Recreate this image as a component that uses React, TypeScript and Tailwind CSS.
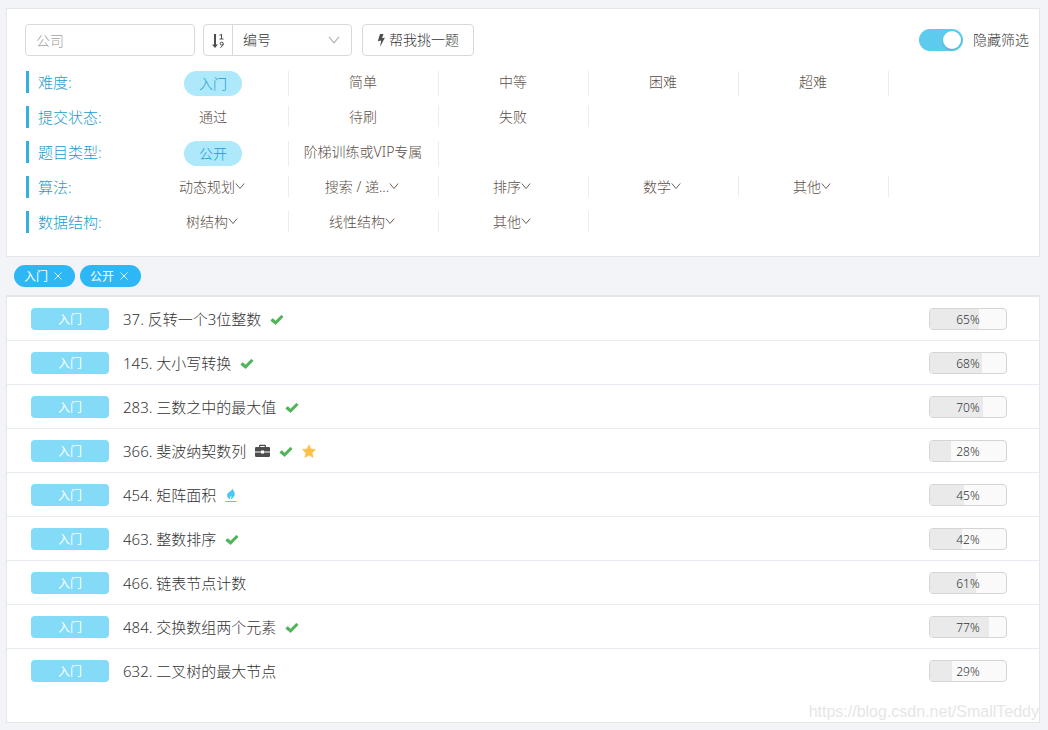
import React, { useState } from 'react';

type Mark = 'check' | 'case' | 'star' | 'flame';

type Option = { label: string; menu?: boolean; active?: boolean };

const filters: { name: string; options: Option[] }[] = [
  {
    name: '难度:',
    options: [
      { label: '入门', active: true },
      { label: '简单' },
      { label: '中等' },
      { label: '困难' },
      { label: '超难' },
    ],
  },
  { name: '提交状态:', options: [{ label: '通过' }, { label: '待刷' }, { label: '失败' }] },
  { name: '题目类型:', options: [{ label: '公开', active: true }, { label: '阶梯训练或VIP专属' }] },
  {
    name: '算法:',
    options: [
      { label: '动态规划', menu: true },
      { label: '搜索 / 递...', menu: true },
      { label: '排序', menu: true },
      { label: '数学', menu: true },
      { label: '其他', menu: true },
    ],
  },
  {
    name: '数据结构:',
    options: [
      { label: '树结构', menu: true },
      { label: '线性结构', menu: true },
      { label: '其他', menu: true },
    ],
  },
];

const problems: { title: string; rate: number; marks: Mark[] }[] = [
  { title: '37. 反转一个3位整数', rate: 65, marks: ['check'] },
  { title: '145. 大小写转换', rate: 68, marks: ['check'] },
  { title: '283. 三数之中的最大值', rate: 70, marks: ['check'] },
  { title: '366. 斐波纳契数列', rate: 28, marks: ['case', 'check', 'star'] },
  { title: '454. 矩阵面积', rate: 45, marks: ['flame'] },
  { title: '463. 整数排序', rate: 42, marks: ['check'] },
  { title: '466. 链表节点计数', rate: 61, marks: [] },
  { title: '484. 交换数组两个元素', rate: 77, marks: ['check'] },
  { title: '632. 二叉树的最大节点', rate: 29, marks: [] },
];

function Chevron({ className }: { className: string }) {
  return (
    <svg viewBox="0 0 10 10" className={className} fill="none" stroke="currentColor" strokeWidth=".9" aria-hidden="true">
      <path d="M.8 1.500 5 6.500 9.200 1.500" />
    </svg>
  );
}

function MarkIcon({ mark }: { mark: Mark }) {
  if (mark === 'check') {
    return (
      <svg viewBox="0 0 14 14" className="size-3.5 text-[#52b45a]" fill="currentColor" aria-hidden="true">
        <path d="M.8 8.1 2.4 6.500Q2.800 6.200 3.200 6.500L5.500 8.700 11 3.200Q11.400 2.900 11.800 3.200L13.200 4.500Q13.500 4.900 13.200 5.300L6.100 12.500Q5.600 13 5.100 12.500L.8 8.900Q.4 8.500 .8 8.100Z" />
      </svg>
    );
  }
  if (mark === 'case') {
    return (
      <svg viewBox="0 0 15 14" className="h-3.5 w-[15px] text-[#4d4d4d]" fill="currentColor" aria-hidden="true">
        <path d="M4 3V1.800Q4 .8 5 .8H10Q11 .8 11 1.800V3H13.800Q15 3 15 4.200V7.500H9V6.500H6V7.500H0V4.200Q0 3 1.200 3ZM5.300 3H9.700V2H5.300ZM0 8.500H6V9.500H9V8.500H15V11.800Q15 13 13.800 13H1.200Q0 13 0 11.800Z" />
      </svg>
    );
  }
  if (mark === 'star') {
    return (
      <svg viewBox="0 0 14 14" className="size-3.5 text-[#fdbf45]" fill="currentColor" stroke="currentColor" strokeWidth=".5" strokeLinejoin="round" aria-hidden="true">
        <path d="M7 .8 9 4.900 13.600 5.400 10.200 8.700 11.200 13.500 7 11.100 2.800 13.500 3.800 8.700.4 5.400 5 4.900Z" />
      </svg>
    );
  }
  return (
    <svg viewBox="0 0 12 14" className="h-3.5 w-3 text-[#4cc6f2]" fill="currentColor" aria-hidden="true">
      <path d="M7.200 0C7.400 2 9.900 3.200 9.800 6 9.700 8.400 8 10 5.400 11.700 6.400 9.800 6.600 8.800 6.200 7.500 5.400 9 4.800 9.600 4.900 11.300 2.700 10 1.700 8.400 2.200 6.300 2.800 4 7.400 3.400 7.200 0ZM.5 13H11.500V14H.5Z" />
    </svg>
  );
}

function SortIcon() {
  return (
    <svg viewBox="0 0 14 16" className="mt-0.5 h-4 w-3.5 text-[#4d4d4d]" fill="none" stroke="currentColor" aria-hidden="true">
      <path d="M4 1V12" strokeWidth="2" />
      <path d="M1 11.500H7L4 15Z" fill="currentColor" stroke="none" />
      <path d="M8.500 2.300 10.500 1.300V6M8.500 6H12.500M12.200 11Q12 12.100 10.700 12.100T9.200 10.600 10.700 9.100 12.300 11 9.400 14.600" />
    </svg>
  );
}

export default function App() {
  const [shown, setShown] = useState(true);
  return (
    <div className="relative min-h-screen bg-[#f3f4f8] pt-2 pr-2 pb-[7px] pl-1.5 font-['Noto_Sans','Noto_Sans_CJK_SC',sans-serif] text-sm font-light text-[#333333]">
      <section className="border border-[#e4e7ea] bg-white px-[18px] pt-[15px] pb-2.5">
        <div className="mb-[15px] flex items-center gap-2">
          <input
            aria-label="公司"
            placeholder="公司"
            className="h-8 w-[170px] rounded border border-[#d9d9d9] px-2.5 placeholder:text-[#a0a0a0]"
          />
          <div className="mr-0.5 flex h-8 rounded border border-[#d9d9d9]">
            <button type="button" aria-label="排序方向" className="flex w-[29px] items-center justify-center border-r border-[#d9d9d9]">
              <SortIcon />
            </button>
            <div className="relative flex">
              <select aria-label="排序" className="w-[118px] appearance-none bg-transparent px-2.5 outline-none">
                <option>编号</option>
              </select>
              <Chevron className="pointer-events-none absolute top-2.5 right-[11px] size-3 text-[#b0b0b0]" />
            </div>
          </div>
          <button type="button" className="flex h-8 items-center gap-1 rounded border border-[#d9d9d9] px-3.5">
            <svg viewBox="0 0 8 13" className="h-[13px] w-2 text-[#4d4d4d]" fill="currentColor" aria-hidden="true">
              <path d="M3 0H6.500L5 4.200 8 3.600 3 13 4.200 6.600.8 7.300Z" />
            </svg>
            帮我挑一题
          </button>
          <label className="-mr-2 ml-auto flex items-center gap-2.5">
            <input type="checkbox" role="switch" checked={shown} onChange={() => setShown(!shown)} className="peer sr-only" />
            <span className="flex h-[22px] w-11 items-center rounded-full bg-[#bfbfbf] px-0.5 peer-checked:justify-end peer-checked:bg-[#5ccbee]">
              <span className="size-[18px] rounded-full bg-white shadow" />
            </span>
            隐藏筛选
          </label>
        </div>
        {shown && (
          <div className="flex flex-col pl-px">
            {filters.map((f) => (
              <div key={f.name} className="flex h-[35px] items-start">
                <h2 className="w-[113px] shrink-0 border-l-[3px] border-[#32b1dc] pl-[9px] text-[15px] leading-[22px] text-[#1c9bcc]">
                  {f.name}
                </h2>
                {f.options.map((o, i) => (
                  <div
                    key={i}
                    className={`flex w-[150px] justify-center border-r border-[#ececec] pr-px ${f.options.some((x) => x.active) ? 'h-[25px]' : 'h-[21px]'}`}
                  >
                    <button
                      type="button"
                      className={
                        o.active
                          ? 'h-[25px] rounded-full bg-[#ade8fb] px-[15px] leading-[25px] text-[#1c9bcc]'
                          : 'flex h-[22px] items-center text-[#5c4f47]'
                      }
                    >
                      {o.label}
                      {o.menu && <Chevron className="mr-0.5 size-2.5" />}
                    </button>
                  </div>
                ))}
              </div>
            ))}
          </div>
        )}
      </section>

      <div className="flex gap-[5px] px-2 py-2">
        {['入门', '公开'].map((t) => (
          <button key={t} type="button" className="flex h-[22px] items-center gap-1.5 rounded-full bg-[#2db7f5] pr-[13px] pl-2.5 text-xs leading-6 font-normal text-white">
            <span className="pt-px">{t}</span>
            <svg viewBox="0 0 8 9" className="h-[9px] w-2" fill="none" stroke="currentColor" strokeWidth=".8" aria-hidden="true">
              <path d="M.5.5 7.500 7.500M7.500.5.5 7.500" />
            </svg>
          </button>
        ))}
      </div>

      <section className="border border-t-2 border-[#e4e7ea] bg-white pb-[30px]">
        <ul>
          {problems.map((p) => (
            <li key={p.title} className="flex border-b border-[#e8eaf2] pt-[11px] pr-8 pb-2.5 pl-6 last:border-b-0">
              <span className="h-[22px] w-[78px] rounded bg-[#83dbf8] text-center text-xs leading-6 font-normal text-white">入门</span>
              <a href="#" className="ml-3.5 text-[15px] leading-[22px]">
                {p.title}
              </a>
              <span className="ml-[9px] flex items-center gap-[9px]">
                {p.marks.map((m) => (
                  <MarkIcon key={m} mark={m} />
                ))}
              </span>
              <span className="relative ml-auto h-[22px] w-[78px] overflow-hidden rounded border border-[#d5d5d5] bg-[#fafafa] text-center text-xs leading-[22px]">
                <span className="absolute inset-y-0 left-0 bg-[#eaeaea]" style={{ width: `${p.rate}%` }} />
                <span className="relative">{p.rate}%</span>
              </span>
            </li>
          ))}
        </ul>
      </section>
      <span className="pointer-events-none absolute right-[9px] bottom-2 font-['Liberation_Sans',sans-serif] text-base font-normal leading-5 text-[#e6e6e6]">
        https://blog.csdn.net/SmallTeddy
      </span>
    </div>
  );
}
